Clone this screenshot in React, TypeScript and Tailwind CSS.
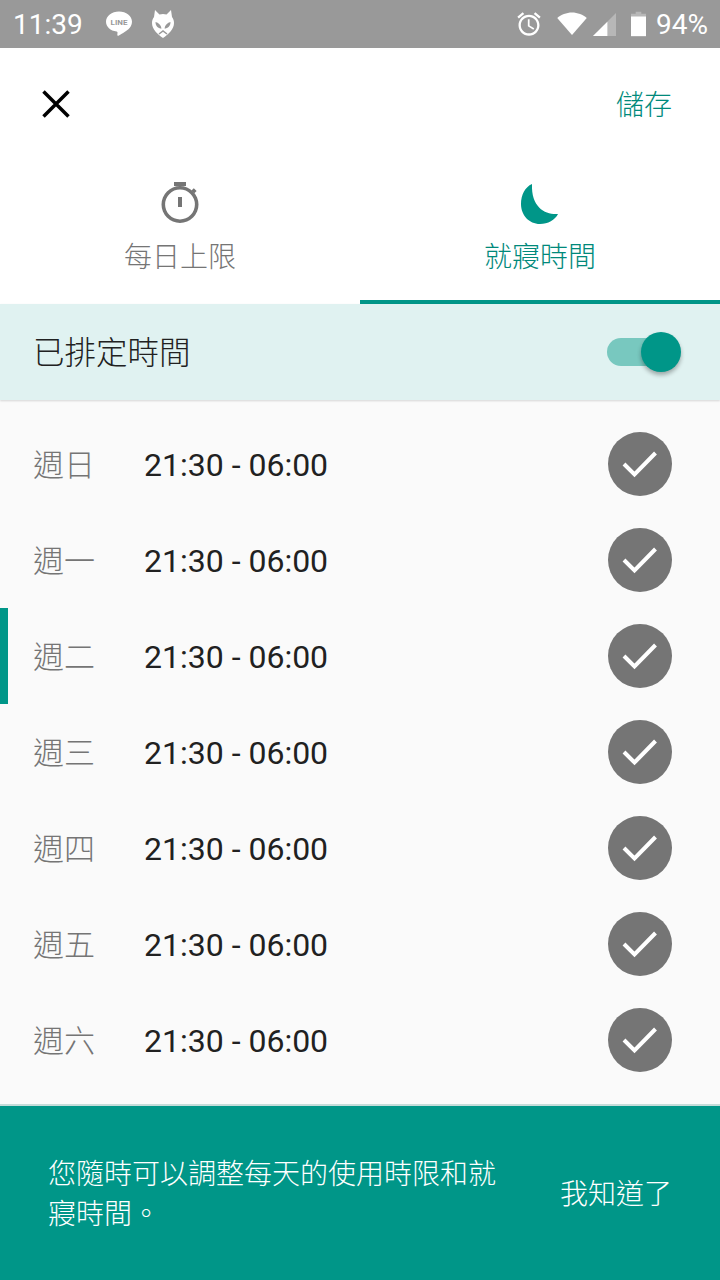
const cjk = { fontFamily: '"Noto Sans CJK TC", "Noto Sans CJK SC", sans-serif' };
const rows = ["週日", "週一", "週二", "週三", "週四", "週五", "週六"];

function LineIcon() {
  return (
    <svg width="28" height="28" viewBox="0 0 28 28">
      <path fill="#fff" d="M14 1.500C6.800 1.500 1 6 1 11.800c0 5 4.400 9 10.600 9.800.6.100 1 .5.900 1.200l-.2 2.200c-.1.600.5 1.100 1.200.7 3-1.800 10.200-5.400 12.300-9.500.8-1.400 1.200-2.800 1.200-4.400C27 6 21.200 1.500 14 1.500z" />
      <text x="14" y="15" textAnchor="middle" fontSize="8" fontWeight="700" fill="#999" fontFamily="Roboto, sans-serif">LINE</text>
    </svg>
  );
}

function FoxIcon() {
  return (
    <svg width="24" height="30" viewBox="0 0 24 30">
      <path fill="#fff" d="M4 1l4.500 4.500Q12 4.500 15.500 5.500L20 1l1 7c1.500 2 2 4 2 6 0 6-5 11-11 15C6 25 1 20 1 14c0-2 .5-4 2-6z" />
      <path fill="#999" d="M4.500 13c3 .5 5.500 3 6 6.500-3.500 0-6-2.500-6-6.500zM19.500 13c-3 .5-5.500 3-6 6.500 3.500 0 6-2.500 6-6.500z" />
      <path fill="none" stroke="#999" strokeWidth="1.500" d="M8 25l4-3 4 3" />
    </svg>
  );
}

function AlarmIcon() {
  return (
    <svg width="28" height="28" viewBox="0 0 24 24" fill="#fff">
      <path d="M22 5.720l-4.600-3.860-1.290 1.530 4.600 3.860L22 5.720zM7.880 3.390L6.600 1.860 2 5.710l1.290 1.530 4.590-3.850zM12.500 8H11v6l4.750 2.850.75-1.230-4-2.370V8zM12 4c-4.970 0-9 4.030-9 9s4.030 9 9 9 9-4.030 9-9-4.030-9-9-9zm0 16c-3.870 0-7-3.130-7-7s3.130-7 7-7 7 3.130 7 7-3.130 7-7 7z" />
    </svg>
  );
}

function Stopwatch() {
  return (
    <svg width="44" height="44" viewBox="0 0 44 44" fill="#757575">
      <rect x="16" y="0" width="12" height="4" />
      <rect x="20" y="15" width="4" height="10" />
      <path fillRule="evenodd" d="M22 4a18.500 18.500 0 1 0 0 37 18.500 18.500 0 0 0 0-37zm0 3.600a14.900 14.900 0 1 1 0 29.800 14.900 14.900 0 0 1 0-29.800z" />
      <path d="M33.500 8.500l2.300-2.300 2.800 2.800-2.300 2.300z" />
    </svg>
  );
}

function Moon() {
  return (
    <svg width="44" height="44" viewBox="0 0 44 44">
      <path fill="#009688" d="M14 2C7 5 3 13 3 22c0 11 8 20 19 20 8 0 15-4 18-10C28 33 13 26 14 2z" />
    </svg>
  );
}

export default function App() {
  return (
    <div className="flex h-[1280px] w-[720px] flex-col overflow-hidden bg-white" style={cjk}>
      {/* Status bar */}
      <div className="flex h-[48px] shrink-0 items-center bg-[#999999] text-white">
        <span className="ml-[13px] w-[70px] pt-[2px] text-[28px] leading-none" style={{ fontFamily: "Roboto, sans-serif" }}>11:39</span>
        <span className="ml-[22px] flex"><LineIcon /></span>
        <span className="ml-[18px] flex"><FoxIcon /></span>
        <span className="ml-auto flex"><AlarmIcon /></span>
        <svg className="ml-[14px]" width="30" height="24" viewBox="0 0 32 26"><path fill="#fff" d="M0 6.500C4 3 10 .5 16 .5S28 3 32 6.500L16 25z" /></svg>
        <svg className="ml-[6px]" width="23" height="23" viewBox="0 0 24 24"><path fill="#fff" fillOpacity="0.3" d="M0 24L24 0v24z" /><path fill="#fff" d="M0 24l15-15v15z" /></svg>
        <svg className="ml-[15px]" width="15" height="26" viewBox="0 0 16 26"><path fill="#fff" fillOpacity="0.3" d="M5 0h6v2h5v5H0V2h5z" /><path fill="#fff" d="M0 5h16v21H0z" /></svg>
        <span className="ml-[10px] mr-[13px] w-[51px] pt-[2px] text-[28px] leading-none" style={{ fontFamily: "Roboto, sans-serif" }}>94%</span>
      </div>

      {/* Toolbar */}
      <div className="flex h-[112px] shrink-0 items-start justify-between">
        <svg className="ml-[41px] mt-[41px]" width="30" height="30" viewBox="0 0 30 30"><path fill="none" stroke="#000" strokeWidth="3.500" d="M2.500 2.500l25 25M27.500 2.500l-25 25" /></svg>
        <span className="mr-[48px] mt-[36px] text-[28px] font-light leading-[38px] text-[#00897b]">儲存</span>
      </div>

      {/* Tabs */}
      <div className="flex h-[144px] shrink-0">
        <div className="flex w-[360px] flex-col items-center pt-[22px]">
          <Stopwatch />
          <span className="mt-[9px] text-[28px] font-light leading-[40px] text-[#757575]">每日上限</span>
        </div>
        <div className="flex w-[360px] flex-col items-center border-b-4 border-[#009688] pt-[22px]">
          <Moon />
          <span className="mt-[9px] text-[28px] font-light leading-[40px] text-[#00897b]">就寢時間</span>
        </div>
      </div>

      {/* Schedule toggle */}
      <div className="relative z-10 flex h-[96px] shrink-0 items-center justify-between bg-[#e0f2f1] pl-[33px] pr-[43px] shadow-[0_1px_2px_rgba(0,0,0,0.15)]">
        <span className="pb-[4px] text-[31.5px] font-light leading-[44px] text-[#212121]">已排定時間</span>
        <div className="relative h-[28px] w-[70px] rounded-full bg-[#78c8bf]">
          <div className="absolute -right-[4px] -top-[6px] h-[40px] w-[40px] rounded-full bg-[#009688] shadow-[0_3px_4px_rgba(0,0,0,0.3)]" />
        </div>
      </div>

      {/* Days */}
      <div className="flex flex-1 flex-col bg-[#fafafa] pt-[16px]">
        {rows.map((day, i) => (
          <div key={day} className="relative flex h-[96px] shrink-0 items-center pl-[33px] pr-[48px]">
            {i === 2 && <div className="absolute left-0 top-0 h-[96px] w-[8px] bg-[#009688]" />}
            <span className="w-[111px] pb-[2px] text-[31px] font-light leading-[44px] text-[#757575]">{day}</span>
            <span className="pt-[2px] text-[32px] leading-[44px] text-[#212121]" style={{ fontFamily: "Roboto, sans-serif" }}>21:30 - 06:00</span>
            <span className="ml-auto flex h-[64px] w-[64px] items-center justify-center rounded-full bg-[#757575]">
              <svg width="36" height="28" viewBox="0 0 36 28"><path fill="none" stroke="#fff" strokeWidth="4" d="M2 14l10.500 10.500L33.500 3" /></svg>
            </span>
          </div>
        ))}
      </div>

      {/* Snackbar */}
      <div className="flex h-[176px] shrink-0 items-center justify-between border-t-2 border-[#c4dcd9] bg-[#009688] pl-[48px] pr-[48px] text-white">
        <p className="w-[452px] pb-[3px] text-[28px] font-light leading-[40px]">您隨時可以調整每天的使用時限和就寢時間。</p>
        <span className="pb-[3px] text-[28px] font-light leading-[40px]">我知道了</span>
      </div>
    </div>
  );
}
